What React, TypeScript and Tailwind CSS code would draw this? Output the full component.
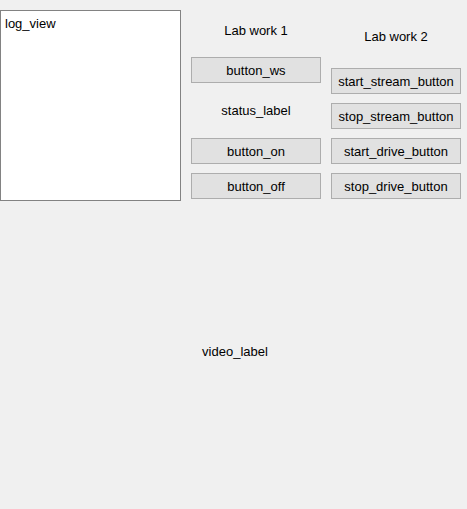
import React from "react";

const FONT = "font-['Liberation_Sans',Arial,sans-serif]";

function QtButton({ label }: { label: string }) {
  return (
    <button
      type="button"
      className="h-[26px] w-[130px] border border-[#adadad] bg-[#e1e1e1] text-[13px] leading-[15px] text-black flex items-center justify-center"
    >
      {label}
    </button>
  );
}

export default function App() {
  return (
    <div className={`w-[467px] h-[509px] bg-[#f0f0f0] text-black text-[13px] leading-[15px] ${FONT} flex flex-col`}>
      {/* top row */}
      <div className="flex pt-[10px]">
        {/* log view */}
        <div className="w-[181px] h-[191px] border border-[#828282] bg-white pl-[4px] pt-[5px]">
          log_view
        </div>

        {/* Lab work 1 */}
        <div className="ml-[10px] w-[130px] flex flex-col">
          <div className="h-[40px] flex items-center justify-center">Lab work 1</div>
          <div className="mt-[7px]">
            <QtButton label="button_ws" />
          </div>
          <div className="h-[55px] flex items-center justify-center">status_label</div>
          <div className="flex flex-col gap-[9px]">
            <QtButton label="button_on" />
            <QtButton label="button_off" />
          </div>
        </div>

        {/* Lab work 2 */}
        <div className="ml-[10px] w-[130px] flex flex-col">
          <div className="h-[52px] flex items-center justify-center">Lab work 2</div>
          <div className="mt-[6px] flex flex-col gap-[9px]">
            <QtButton label="start_stream_button" />
            <QtButton label="stop_stream_button" />
            <QtButton label="start_drive_button" />
            <QtButton label="stop_drive_button" />
          </div>
        </div>
      </div>

      {/* video area */}
      <div className="flex-1 flex items-center justify-center pl-[3px] pb-[8px]">
        video_label
      </div>
    </div>
  );
}
